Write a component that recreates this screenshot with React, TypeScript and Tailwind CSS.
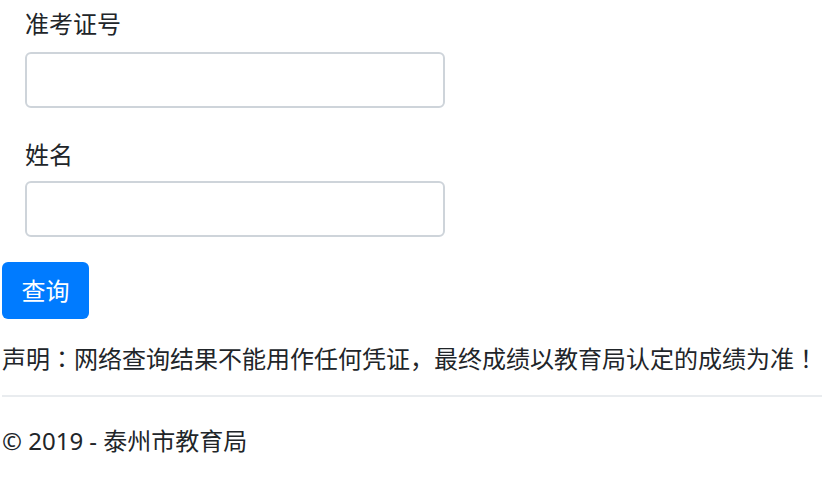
import React from 'react';

export default function App() {
    return (
        <div className="min-h-screen bg-white text-[24px] leading-[36px] text-[#212529] [text-spacing-trim:space-all]" style={{ fontFamily: '"Noto Sans", "Noto Sans CJK SC", sans-serif' }}>
            <div className="pl-[2px]">
                <form onSubmit={e => e.preventDefault()}>
                    <div className="pl-[23px] pt-[6px]">
                        <label className="block">准考证号</label>
                        <input type="text" className="mt-[10px] block w-[420px] h-[56px] rounded-[6px] border-2 border-[#ced4da] bg-white px-3 outline-none" />
                    </div>
                    <div className="pl-[23px] pt-[29px]">
                        <label className="block">姓名</label>
                        <input type="text" className="mt-[8px] block w-[420px] h-[56px] rounded-[6px] border-2 border-[#ced4da] bg-white px-3 outline-none" />
                    </div>
                    <button type="submit" className="mt-[25px] block h-[57px] w-[87px] rounded-[6px] bg-[#007bff] text-white">查询</button>
                </form>
                <p className="mt-[21px] whitespace-nowrap" style={{ fontFamily: '"Noto Sans CJK JP", sans-serif' }}>声明：网络查询结果不能用作任何凭证，最终成绩以教育局认定的成绩为准！</p>
                <hr className="mt-[19px] border-t-2 border-[#e9ecef]" />
                <footer className="mt-[26px]">
                    <p>© 2019 - 泰州市教育局</p>
                </footer>
            </div>
        </div>
    );
}
